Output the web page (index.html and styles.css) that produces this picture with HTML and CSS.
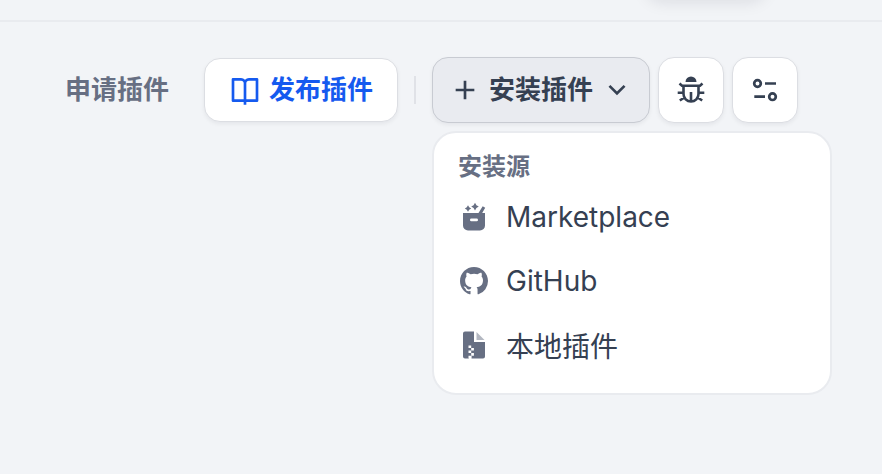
FILE: index.html
```html
<!DOCTYPE html>
<html lang="zh-CN">
<head>
  <meta charset="UTF-8">
  <meta name="viewport" content="width=device-width, initial-scale=1.0">
  <title>插件</title>
  <link rel="stylesheet" href="styles.css">
</head>
<body>

<header class="header">
  <div class="header-tab"></div>
</header>

<main class="toolbar">
  <a class="link" href="#">申请插件</a>

  <a class="btn btn-publish" href="#">
    <svg class="icon" viewBox="0 0 24 24" fill="currentColor" aria-hidden="true">
      <path d="M13 21v2h-2v-2H3a1 1 0 0 1-1-1V4a1 1 0 0 1 1-1h6a4 4 0 0 1 3 1.35A4 4 0 0 1 15 3h6a1 1 0 0 1 1 1v16a1 1 0 0 1-1 1h-8zm7-2V5h-5a2 2 0 0 0-2 2v12h7zm-9 0V7a2 2 0 0 0-2-2H4v14h7z"/>
    </svg>
    发布插件
  </a>

  <span class="divider"></span>

  <div class="actions">
    <div class="dropdown">
      <button class="btn btn-install" type="button" aria-haspopup="menu" aria-expanded="true">
        <svg class="icon" viewBox="0 0 24 24" fill="currentColor" aria-hidden="true">
          <path d="M11 11V5h2v6h6v2h-6v6h-2v-6H5v-2z"/>
        </svg>
        安装插件
        <svg class="icon" viewBox="0 0 24 24" fill="currentColor" aria-hidden="true">
          <path d="M12 13.170l4.950-4.950 1.410 1.420L12 16 5.640 9.640l1.410-1.420z"/>
        </svg>
      </button>

      <div class="menu" role="menu">
        <h2 class="menu-title">安装源</h2>
        <button class="menu-item" type="button" role="menuitem">
          <svg class="icon" viewBox="0 0 32 32" fill="currentColor" aria-hidden="true">
            <path fill-rule="evenodd" d="M5 12h15.500l4.200-6.800 2.500 1.500L24.200 12H27v12.500a5 5 0 0 1-5 5H10a5 5 0 0 1-5-5zM13.400 17.500a1.400 1.400 0 0 0 0 2.800h5.200a1.400 1.400 0 0 0 0-2.800z"/>
            <path d="M10 4.300l1.200 2 2 1.200-2 1.200-1.200 2-1.200-2-2-1.200 2-1.200zM17 1.800l1.400 2.400 2.400 1.400L18.400 7 17 9.400 15.600 7l-2.400-1.400 2.400-1.400z"/>
          </svg>
          Marketplace
        </button>
        <button class="menu-item" type="button" role="menuitem">
          <svg class="icon" viewBox="0 0 24 24" fill="currentColor" aria-hidden="true">
            <path d="M12 1.500C6.200 1.500 1.500 6.200 1.500 12c0 4.640 3.010 8.580 7.180 9.970.53.090.72-.23.72-.5v-1.950c-2.640.49-3.320-.64-3.530-1.230-.12-.3-.63-1.230-1.070-1.480-.37-.2-.9-.68-.02-.69.830-.01 1.420.76 1.620 1.080.94 1.590 2.450 1.140 3.060.87.090-.68.360-1.140.67-1.410-2.340-.26-4.780-1.170-4.780-5.180 0-1.140.41-2.090 1.080-2.820-.11-.26-.47-1.340.1-2.780 0 0 .88-.28 2.890 1.070a9.800 9.800 0 0 1 5.260 0c2.010-1.360 2.880-1.070 2.880-1.070.58 1.440.22 2.520.11 2.780.67.73 1.070 1.660 1.070 2.820 0 4.030-2.450 4.920-4.790 5.180.38.330.71.96.71 1.940v2.870c0 .28.190.61.72.5A10.510 10.510 0 0 0 22.500 12c0-5.800-4.700-10.500-10.500-10.500z"/>
          </svg>
          GitHub
        </button>
        <button class="menu-item" type="button" role="menuitem">
          <svg class="icon" viewBox="0 0 32 32" fill="currentColor" aria-hidden="true">
            <path d="M7 2.500h9V13h11v14.500a2 2 0 0 1-2 2H13.500V27H11v2.500H7a2 2 0 0 1-2-2v-23a2 2 0 0 1 2-2z"/>
            <path opacity=".5" d="M18.500 3l8 8h-8z"/>
            <path fill="#fff" d="M10.500 16.500h2.700v2.500h-2.700zM13.200 19h2.700v2.500h-2.700zM10.500 21.500h2.700V24h-2.700zM13.200 24h2.700v2.700h-2.700zM10.500 26.700h2.700v2.800h-2.700z"/>
          </svg>
          本地插件
        </button>
      </div>
    </div>

    <button class="btn btn-icon" type="button" aria-label="调试">
      <svg class="icon" viewBox="0 0 32 32" fill="none" stroke="currentColor" stroke-width="2.600" aria-hidden="true">
        <path d="M10.500 8a5.500 5.500 0 0 1 11 0z" fill="currentColor" stroke="none"/>
        <path d="M4.500 9.500l2.500 2.200h18l2.500-2.200M8.500 12v8a7.500 7.500 0 0 0 15 0v-8M16 18v9M2.700 18.700h5.800M23.500 18.700h5.800M4.800 26.500l4.500-3M27.200 26.500l-4.500-3"/>
      </svg>
    </button>
    <button class="btn btn-icon" type="button" aria-label="设置">
      <svg class="icon" viewBox="0 0 32 32" fill="none" stroke="currentColor" stroke-width="2.700" aria-hidden="true">
        <circle cx="8.500" cy="9.500" r="3.300"/>
        <circle cx="23.500" cy="22.700" r="3.300"/>
        <path d="M16 9.500h11M5.300 22.700H16"/>
      </svg>
    </button>
  </div>
</main>

</body>
</html>
```

FILE: styles.css
```css
* {
  box-sizing: border-box;
}

body {
  min-height: 100vh;
  margin: 0;
  background: #f2f4f7;
  color: #354052;
  font-family: Inter, "Noto Sans CJK SC", sans-serif;
}

.header {
  display: flex;
  justify-content: flex-end;
  height: 22px;
  padding-right: 116px;
  border-bottom: 2px solid #e9ebef;
}

/* only the shadow of the active tab reaches into view */
.header-tab {
  width: 120px;
  height: 40px;
  margin-top: -44px;
  border-radius: 16px;
  background: #fff;
  box-shadow: 0 6px 16px rgba(16, 24, 40, 0.1);
}

.toolbar {
  display: flex;
  align-items: center;
  justify-content: flex-end;
  padding: 35px 84px 0 24px;
}

.link {
  margin-right: 35px;
  color: #676f83;
  font-size: 26px;
  font-weight: 600;
  line-height: 34px;
  text-decoration: none;
  white-space: nowrap;
}

.icon {
  flex: none;
  width: 32px;
  height: 32px;
}

.btn {
  display: flex;
  align-items: center;
  justify-content: center;
  gap: 8px;
  height: 66px;
  border: 1px solid #dcdee3;
  border-radius: 16px;
  background: #fff;
  box-shadow: 0 2px 4px rgba(16, 24, 40, 0.06);
  color: #354052;
  font-family: inherit;
  font-size: 26px;
  font-weight: 600;
  line-height: 34px;
  text-decoration: none;
  white-space: nowrap;
  cursor: pointer;
}

.btn-publish {
  height: 64px;
  padding: 0 24px;
  color: #155aef;
}

.btn-install {
  padding: 0 16px;
  border-color: #c8cbd2;
  background: #e9ebf0;
}

.btn-icon {
  width: 66px;
  padding: 0;
}

.divider {
  width: 2px;
  height: 28px;
  margin: 0 16px;
  background: #e0e2e7;
}

.actions {
  display: flex;
  gap: 8px;
}

.dropdown {
  position: relative;
}

.menu {
  position: absolute;
  top: 100%;
  left: 0;
  width: 400px;
  margin-top: 8px;
  padding: 16px 0;
  border: 2px solid #e9ebef;
  border-radius: 24px;
  background: #fff;
}

.menu-title {
  margin: 0;
  padding: 0 24px;
  color: #676f83;
  font-size: 24px;
  font-weight: 600;
  line-height: 36px;
}

.menu-item {
  display: flex;
  align-items: center;
  gap: 16px;
  width: 100%;
  height: 64px;
  padding: 0 24px;
  border: 0;
  background: none;
  color: #354052;
  font-family: inherit;
  font-size: 28px;
  text-align: left;
  cursor: pointer;
}

.menu-item .icon {
  color: #676f83;
}

.menu-item:hover {
  background: #f2f4f7;
}
```
